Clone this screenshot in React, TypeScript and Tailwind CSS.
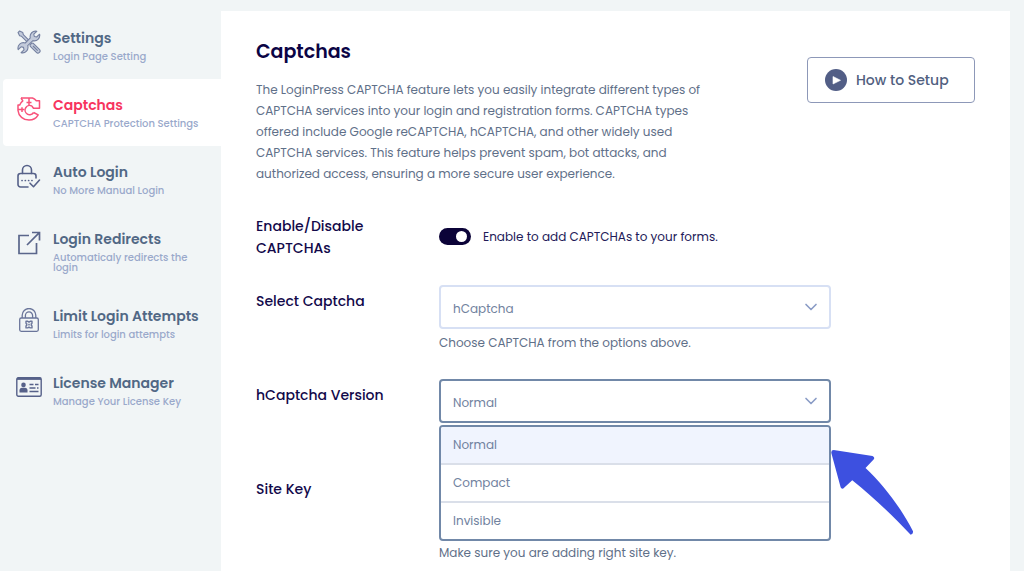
import { useState } from "react";
import type { ReactNode } from "react";
import { ChevronDown } from "lucide-react";

function ToolsIcon() {
  return (
    <svg viewBox="0 0 24 24" className="w-6 h-6" fill="#c3cbdb" stroke="#7480a0" strokeWidth="1.1" strokeLinejoin="round">
      <path d="M1 2.6 2.6 1l3.2 1.6.5 2 6 6-1.7 1.7-6-6-2-.5z" />
      <path d="m13 14.8 1.8-1.8 1.5.3 6.1 6.1a2.1 2.1 0 0 1-3 3l-6.1-6.1z" />
      <path d="m16 16 4.7 4.7" fill="none" />
      <path d="M22.6 4.2 19.6 7l-2.3-.5-.5-2.3 3-2.9a5.4 5.4 0 0 0-6.5 6.6L8.2 13a5.4 5.4 0 0 0-7 6.6l2.9-2.8 2.4.6.5 2.4-2.9 2.8a5.4 5.4 0 0 0 6.6-6.9l5.2-5.1a5.4 5.4 0 0 0 6.7-6.4z" />
    </svg>
  );
}

function CaptchaIcon() {
  return (
    <svg viewBox="0 0 24 24" className="w-6 h-6" fill="none" stroke="#f8527a" strokeWidth="1.5" strokeLinejoin="round">
      <path d="M4 1h11.500c1.500.6 2.800 1.500 3.800 2.700h3.200v7.600h-6L14.800 9" />
      <path d="M4 1l1.800 2.800C4.300 5 3.300 6.300 2.700 8H1v5.500C1.500 19 6.200 23 12 23c4 0 7.300-1.900 9.200-5.200l-4.600-2.300" />
      <path d="M14.800 9a4.600 4.600 0 1 0 1.800 6.500" />
      <path d="M12 1v7M9.500 5.500h5M1 12.600h6.400M5 10.200v4.800" />
    </svg>
  );
}

function LockCheckIcon() {
  return (
    <svg viewBox="0 0 24 24" className="w-6 h-6" fill="none" stroke="#566189" strokeWidth="1.6" strokeLinecap="round" strokeLinejoin="round">
      <path d="M5.500 9.500V6a4.500 4.500 0 0 1 9 0v3.500" />
      <path d="M19 14v-2a2.500 2.500 0 0 0-2.500-2.500h-13A2.500 2.500 0 0 0 1 12v8.500A2.500 2.500 0 0 0 3.500 23H11" />
      <path d="m13 19.200 3.500 3.500L22.500 16" />
      <path d="M5 16.500h.1M8.300 16.500h.1M11.600 16.500h.1M14.900 16.500h.1" strokeWidth="1.700" />
    </svg>
  );
}

function RedirectIcon() {
  return (
    <svg viewBox="0 0 24 24" className="w-6 h-6" fill="none" stroke="#5a668b" strokeWidth="1.7">
      <path d="M12 4.500H2v18h17.500V12" />
      <path d="M15 1.500h7.500v8M22.300 1.700 10 14" />
    </svg>
  );
}

function LockIcon() {
  return (
    <svg viewBox="0 0 24 24" className="w-6 h-6" fill="none" stroke="#6a759a" strokeWidth="1.300" strokeLinejoin="round">
      <rect x="2.700" y="10" width="18.600" height="13.300" rx="1.500" />
      <path d="M5.200 10V7.300a6.800 6.800 0 0 1 13.600 0V10M8.400 10V7.500a3.600 3.600 0 0 1 7.200 0V10" />
      <path d="M9 13.300h1.800l1.200.8 1.200-.8H15v1.800l-.8 1.500.8 1.500v1.800h-1.800l-1.200-.8-1.200.8H9v-1.800l.8-1.500-.8-1.500z" strokeWidth="1.400" />
      <path d="m11 15.600 2 2m0-2-2 2" strokeWidth="1" />
    </svg>
  );
}

function LicenseIcon() {
  return (
    <svg viewBox="0 0 26 20" className="w-[26px] h-5" fill="none" stroke="#566189">
      <rect x="0.800" y="0.800" width="24.400" height="18.400" rx="1.500" strokeWidth="1.400" />
      <path d="M1 1.800h24" strokeWidth="2.200" />
      <circle cx="7.500" cy="7.900" r="2.300" fill="#566189" stroke="none" />
      <path d="M3.500 15.500v-2.200c0-1.700 1-2.600 2.500-2.600h3c1.500 0 2.500.9 2.500 2.600v2.200z" fill="#566189" stroke="none" />
      <path d="M13.500 7.500h4M19 7.500h3.500M13.500 11h6M21 11h1.500M13.500 14.500h9" strokeWidth="1.300" />
    </svg>
  );
}

const tabs = [
  { title: "Settings", subtitle: "Login Page Setting", icon: ToolsIcon },
  { title: "Captchas", subtitle: "CAPTCHA Protection Settings", icon: CaptchaIcon },
  { title: "Auto Login", subtitle: "No More Manual Login", icon: LockCheckIcon },
  { title: "Login Redirects", subtitle: "Automaticaly redirects the login", icon: RedirectIcon },
  { title: "Limit Login Attempts", subtitle: "Limits for login attempts", icon: LockIcon },
  { title: "License Manager", subtitle: "Manage Your License Key", icon: LicenseIcon },
];

const versions = ["Normal", "Compact", "Invisible"];

function Sidebar() {
  const [active, setActive] = useState("Captchas");

  return (
    <nav className="w-[221px] shrink-0 pl-[3px] pt-3">
      {tabs.map((tab) => {
        const Icon = tab.icon;
        const isActive = tab.title === active;
        return (
          <button
            key={tab.title}
            type="button"
            onClick={() => setActive(tab.title)}
            className={`flex w-full gap-[11px] rounded-l pl-[13px] pr-4 pt-4 pb-[17px] text-left ${isActive ? "bg-white" : ""}`}
          >
            <span className="flex h-7 w-[26px] shrink-0 items-center justify-center">
              <Icon />
            </span>
            <span className="min-w-0">
              <span className={`block whitespace-nowrap text-[14px] leading-5 font-semibold ${isActive ? "text-[#f7345e]" : "text-[#516885]"}`}>
                {tab.title}
              </span>
              <span className="mt-1 block max-w-[150px] text-[10px] leading-[10px] font-medium text-[#9aa9cb]">{tab.subtitle}</span>
            </span>
          </button>
        );
      })}
    </nav>
  );
}

function Field({ label, htmlFor, children }: { label: string; htmlFor: string; children: ReactNode }) {
  return (
    <div className="flex">
      <label htmlFor={htmlFor} className="w-[183px] shrink-0 pt-[5px] pr-12 text-[14px] leading-[22px] font-medium text-[#12094a]">
        {label}
      </label>
      <div className="relative w-full max-w-[392px]">{children}</div>
    </div>
  );
}

function HelpText({ children }: { children: ReactNode }) {
  return <p className="mt-1 text-[12px] leading-5 text-[#5f7089]">{children}</p>;
}

export default function App() {
  const [enabled, setEnabled] = useState(true);
  const [version, setVersion] = useState("Normal");
  const [open, setOpen] = useState(true);

  return (
    <div className="flex min-h-screen bg-[#f1f5f6] pr-[14px] font-[Poppins,Inter,sans-serif]">
      <Sidebar />

      <main className="mt-[11px] min-w-0 flex-1 bg-white px-[35px] pt-[27px]">
        {/* Heading */}
        <div className="flex items-start justify-between gap-8">
          <div>
            <h1 className="text-[19px] leading-7 font-semibold text-[#0b0445]">Captchas</h1>
            <p className="mt-[13px] text-[12px] leading-[21px] text-[#5f7089]">
              The LoginPress CAPTCHA feature lets you easily integrate different types of
              <br />
              CAPTCHA services into your login and registration forms. CAPTCHA types
              <br />
              offered include Google reCAPTCHA, hCAPTCHA, and other widely used
              <br />
              CAPTCHA services. This feature helps prevent spam, bot attacks, and
              <br />
              authorized access, ensuring a more secure user experience.
            </p>
          </div>
          <button
            type="button"
            className="mt-[19px] flex h-[46px] w-[168px] shrink-0 items-center gap-[9px] rounded border border-[#8d98b8] pl-[17px] text-[14px] font-medium text-[#516080]"
          >
            <svg viewBox="0 0 22 22" className="w-[22px] h-[22px]">
              <circle cx="11" cy="11" r="11" fill="#525e86" />
              <path d="M8 7.500v7.500l7.500-3.700z" fill="#fff" stroke="#fff" strokeWidth="0.600" strokeLinejoin="round" />
            </svg>
            How to Setup
          </button>
        </div>

        {/* Form */}
        <div className="mt-[26px] flex flex-col gap-[26px]">
          <Field label="Enable/Disable CAPTCHAs" htmlFor="enable-captchas">
            <div className="flex items-center gap-3 pt-[18px]">
              <input
                id="enable-captchas"
                type="checkbox"
                role="switch"
                checked={enabled}
                onChange={(e) => setEnabled(e.target.checked)}
                className="h-[17px] w-8 shrink-0 appearance-none rounded-full bg-[#b8c2d8] before:m-[3px] before:block before:h-[11px] before:w-[11px] before:rounded-full before:bg-white checked:bg-[#0b0338] checked:before:ml-[17px]"
              />
              <label htmlFor="enable-captchas" className="text-[12px] leading-[17px] text-[#221a58]">
                Enable to add CAPTCHAs to your forms.
              </label>
            </div>
          </Field>

          <Field label="Select Captcha" htmlFor="captcha-type">
            <div className="relative">
              <select
                id="captcha-type"
                defaultValue="hCaptcha"
                className="block h-11 w-full appearance-none rounded border-2 border-[#d7e0f4] bg-white px-3 pt-[3px] text-[12px] text-[#71829e]"
              >
                <option>hCaptcha</option>
                <option>reCAPTCHA</option>
              </select>
              <ChevronDown className="pointer-events-none absolute right-[10px] top-3 h-5 w-5 text-[#8a9cc6]" />
            </div>
            <HelpText>Choose CAPTCHA from the options above.</HelpText>
          </Field>

          <Field label="hCaptcha Version" htmlFor="captcha-version">
            <div className="relative h-[68px]">
              <button
                id="captcha-version"
                type="button"
                aria-haspopup="listbox"
                aria-expanded={open}
                onClick={() => setOpen(!open)}
                className="relative block h-11 w-full rounded border-2 border-[#7188a8] bg-white px-3 pt-[3px] text-left text-[12px] text-[#71829e]"
              >
                {version}
                <ChevronDown className="absolute right-2 top-[10px] h-5 w-5 text-[#8a9cc6]" />
              </button>
              {open && (
                <ul
                  role="listbox"
                  aria-label="hCaptcha Version"
                  className="absolute inset-x-0 top-[46px] z-10 divide-y-2 divide-[#dadfe9] overflow-hidden rounded border-2 border-[#7188a8] bg-white"
                >
                  {versions.map((item) => (
                    <li key={item} role="option" aria-selected={item === version}>
                      <button
                        type="button"
                        onClick={() => {
                          setVersion(item);
                          setOpen(false);
                        }}
                        className={`block h-9 w-full px-3 text-left text-[12px] text-[#71829e] ${item === version ? "bg-[#f0f4fe]" : ""}`}
                      >
                        {item}
                      </button>
                    </li>
                  ))}
                </ul>
              )}
              {/* Pointer to the open list */}
              <svg viewBox="0 0 250 262" className="pointer-events-none absolute left-full top-[70px] z-20 h-[87px] w-[83px]" fill="#3d50e0">
                <path d="M8 3 125 21Q133 25 129 31L104 57C158 108 210 175 247 248Q248 257 240 258C190 205 130 147 64 94L37 119Q31 121 29 115L1 12Q0 3 8 3z" />
              </svg>
            </div>
          </Field>

          <Field label="Site Key" htmlFor="site-key">
            <input id="site-key" type="text" className="block h-11 w-full rounded border-2 border-[#d7e0f4] px-3 text-[12px]" />
            <div className="pt-[22px]">
              <HelpText>Make sure you are adding right site key.</HelpText>
            </div>
          </Field>
        </div>
      </main>
    </div>
  );
}
